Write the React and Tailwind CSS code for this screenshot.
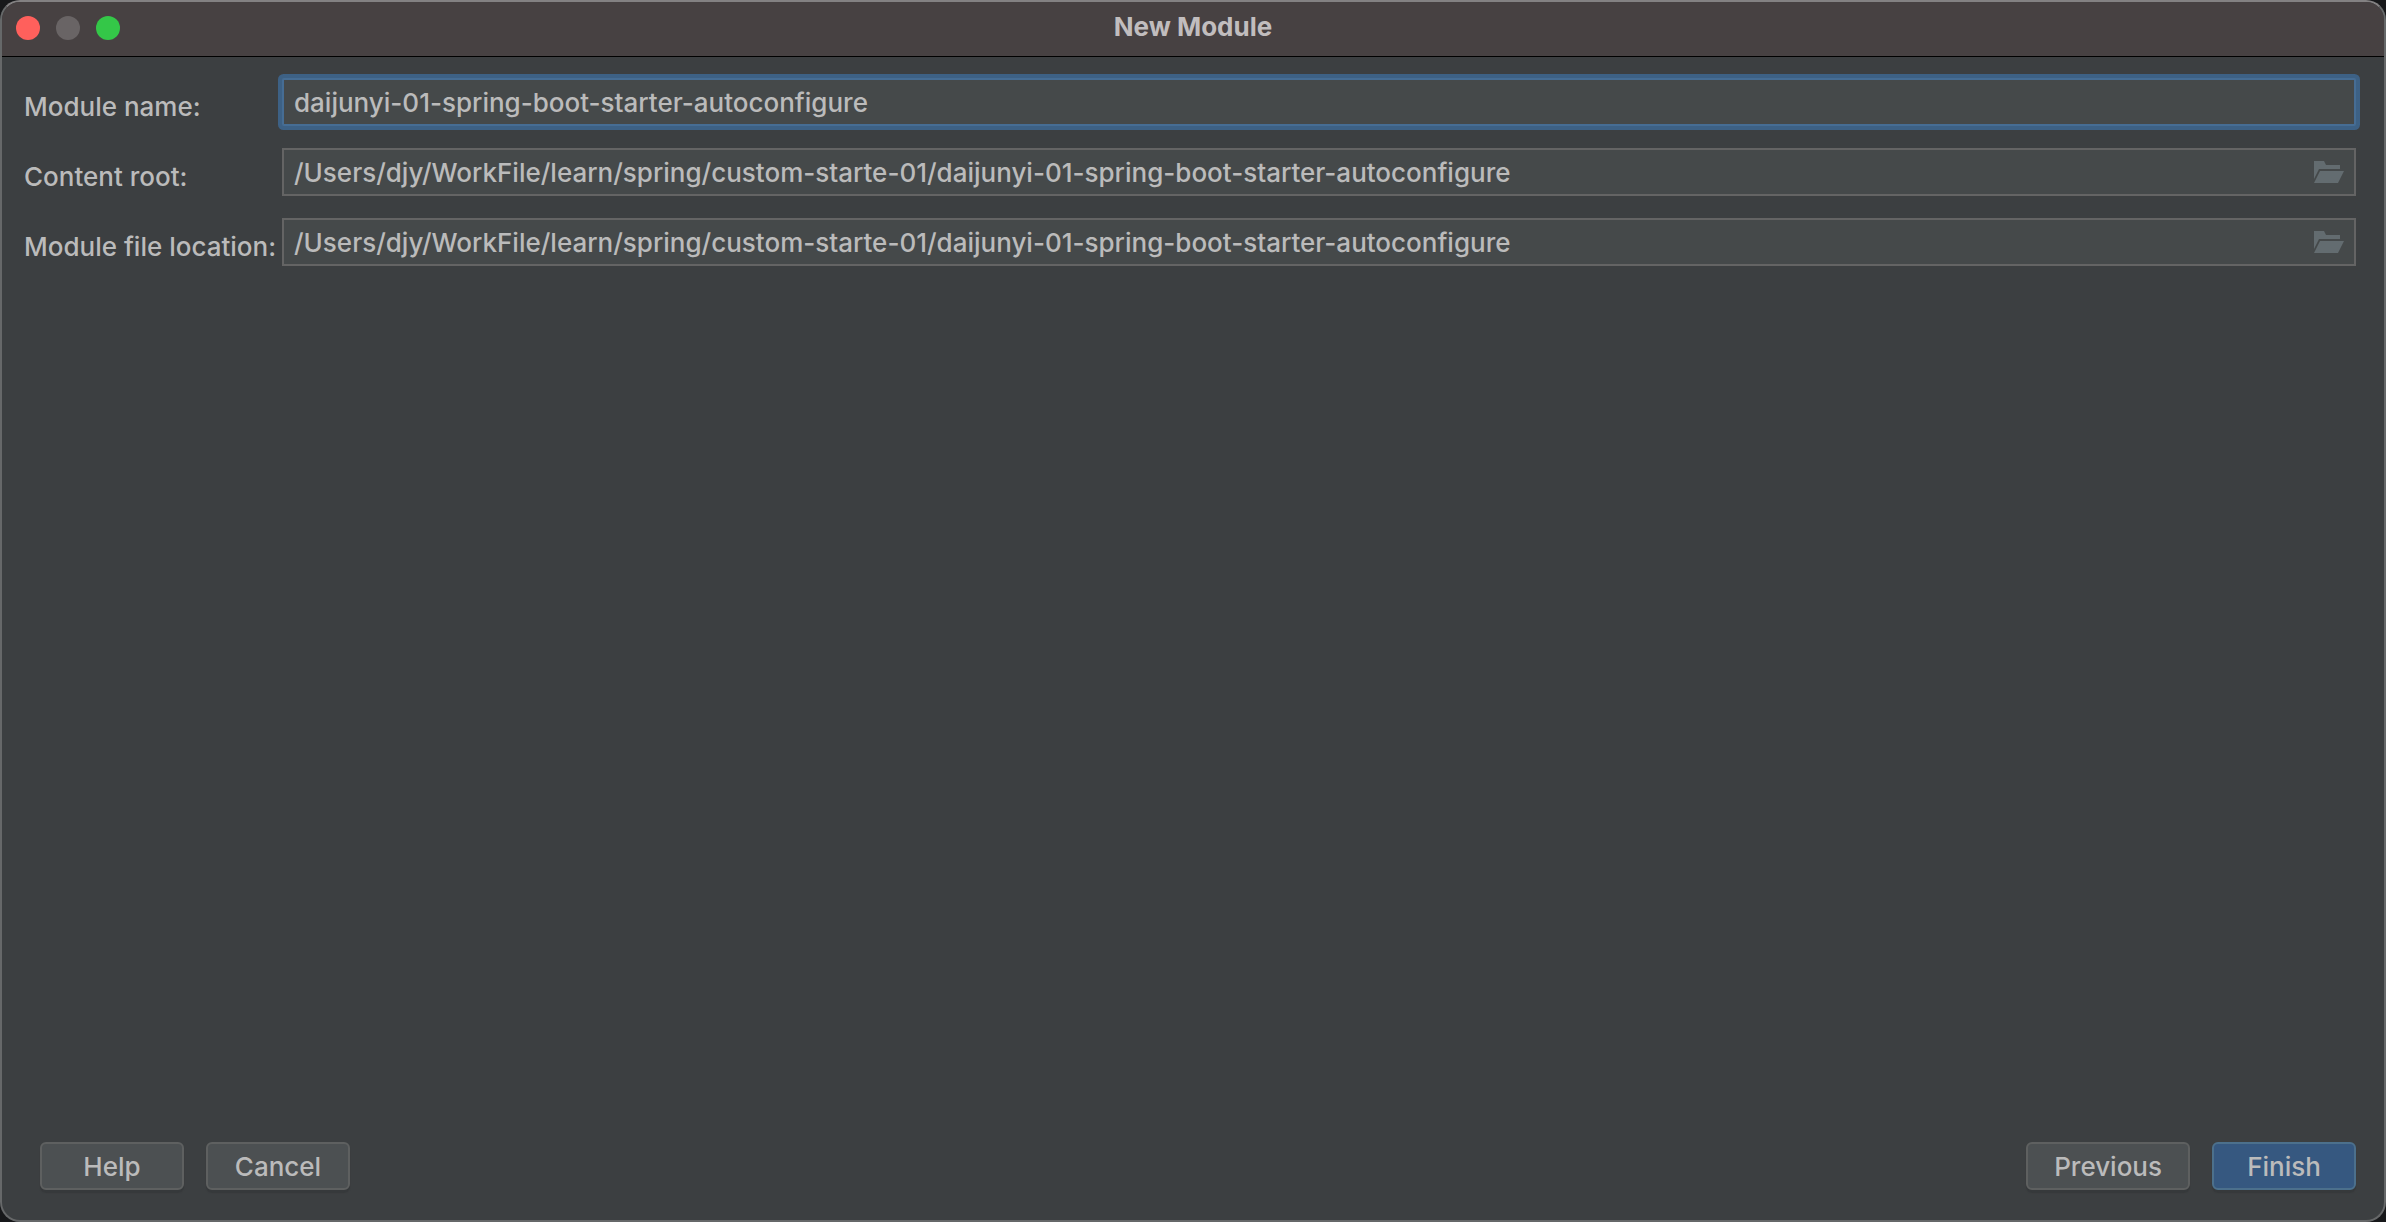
import React, { useState } from "react";

const fields = [
  { id: "moduleName", label: "Module name:", browse: false },
  { id: "contentRoot", label: "Content root:", browse: true },
  { id: "fileLocation", label: "Module file location:", browse: true },
];

const FolderIcon = () => (
  <svg width="30" height="22" viewBox="0 0 30 22" fill="#636c70">
    <path d="M0 0H10L12 4H26V8H5L0 18Z" />
    <path d="M6 10H30L24 22H0Z" />
  </svg>
);

const buttonBase =
  "h-12 min-w-36 px-[26px] pt-0.5 rounded-md border-2 text-[26px] leading-8 shadow-[0_3px_1px_#36393b]";

function DialogButton({ primary, children }) {
  return (
    <button
      type="button"
      className={`${buttonBase} ${
        primary
          ? "bg-[#365880] border-[#4c708c] text-[#bbbbbb]"
          : "bg-[#4c5052] border-[#5e6060] text-[#bbbbbb]"
      }`}
    >
      {children}
    </button>
  );
}

export default function App() {
  const [values, setValues] = useState({
    moduleName: "daijunyi-01-spring-boot-starter-autoconfigure",
    contentRoot:
      "/Users/djy/WorkFile/learn/spring/custom-starte-01/daijunyi-01-spring-boot-starter-autoconfigure",
    fileLocation:
      "/Users/djy/WorkFile/learn/spring/custom-starte-01/daijunyi-01-spring-boot-starter-autoconfigure",
  });

  const handleChange = (id, value) => {
    setValues((prev) => ({ ...prev, [id]: value }));
  };

  return (
    <div className="bg-[#17181a] font-['Inter',sans-serif] font-medium text-[#bbbbbb]">
      <div className="flex flex-col min-h-screen overflow-hidden rounded-[20px] border-2 border-[#666869] border-t-[#838182] bg-[#3c3f41]">
        <header className="grid grid-cols-3 items-center h-[55px] px-3.5 pb-0.5 bg-[#474142] border-b border-black">
          <div className="flex gap-4">
            <button type="button" aria-label="Close" className="size-6 rounded-full bg-[#ff605c]" />
            <button type="button" aria-label="Minimize" className="size-6 rounded-full bg-[#696465]" />
            <button type="button" aria-label="Zoom" className="size-6 rounded-full bg-[#34c748]" />
          </div>
          <h1 className="pb-0.5 text-[26px] leading-8 font-bold text-center text-[#c1bdbe]">New Module</h1>
        </header>

        <main className="flex flex-col flex-1 gap-[22px] pt-[21px] pl-[22px] pr-7">
          {fields.map((field) => (
            <div key={field.id} className="flex items-center">
              <label htmlFor={field.id} className="w-[258px] shrink-0 pt-2.5 text-[26px] leading-8 whitespace-nowrap">
                {field.label}
              </label>
              <div
                className={`flex items-center flex-1 h-12 border-2 bg-[#45494a] ${
                  field.browse
                    ? "border-[#646464]"
                    : "border-[#466d94] rounded-xs ring-4 ring-[#3d6185]"
                }`}
              >
                <input
                  id={field.id}
                  type="text"
                  value={values[field.id]}
                  onChange={(e) => handleChange(field.id, e.target.value)}
                  className="flex-1 min-w-0 h-full px-2.5 text-[26px] leading-8 bg-transparent outline-none"
                />
                {field.browse && (
                  <button type="button" aria-label="Browse" className="mr-2.5">
                    <FolderIcon />
                  </button>
                )}
              </div>
            </div>
          ))}
        </main>

        <footer className="flex justify-between pt-6 pb-[30px] pl-[38px] pr-7">
          <div className="flex gap-[22px]">
            <DialogButton>Help</DialogButton>
            <DialogButton>Cancel</DialogButton>
          </div>
          <div className="flex gap-[22px]">
            <DialogButton>Previous</DialogButton>
            <DialogButton primary>Finish</DialogButton>
          </div>
        </footer>
      </div>
    </div>
  );
}
